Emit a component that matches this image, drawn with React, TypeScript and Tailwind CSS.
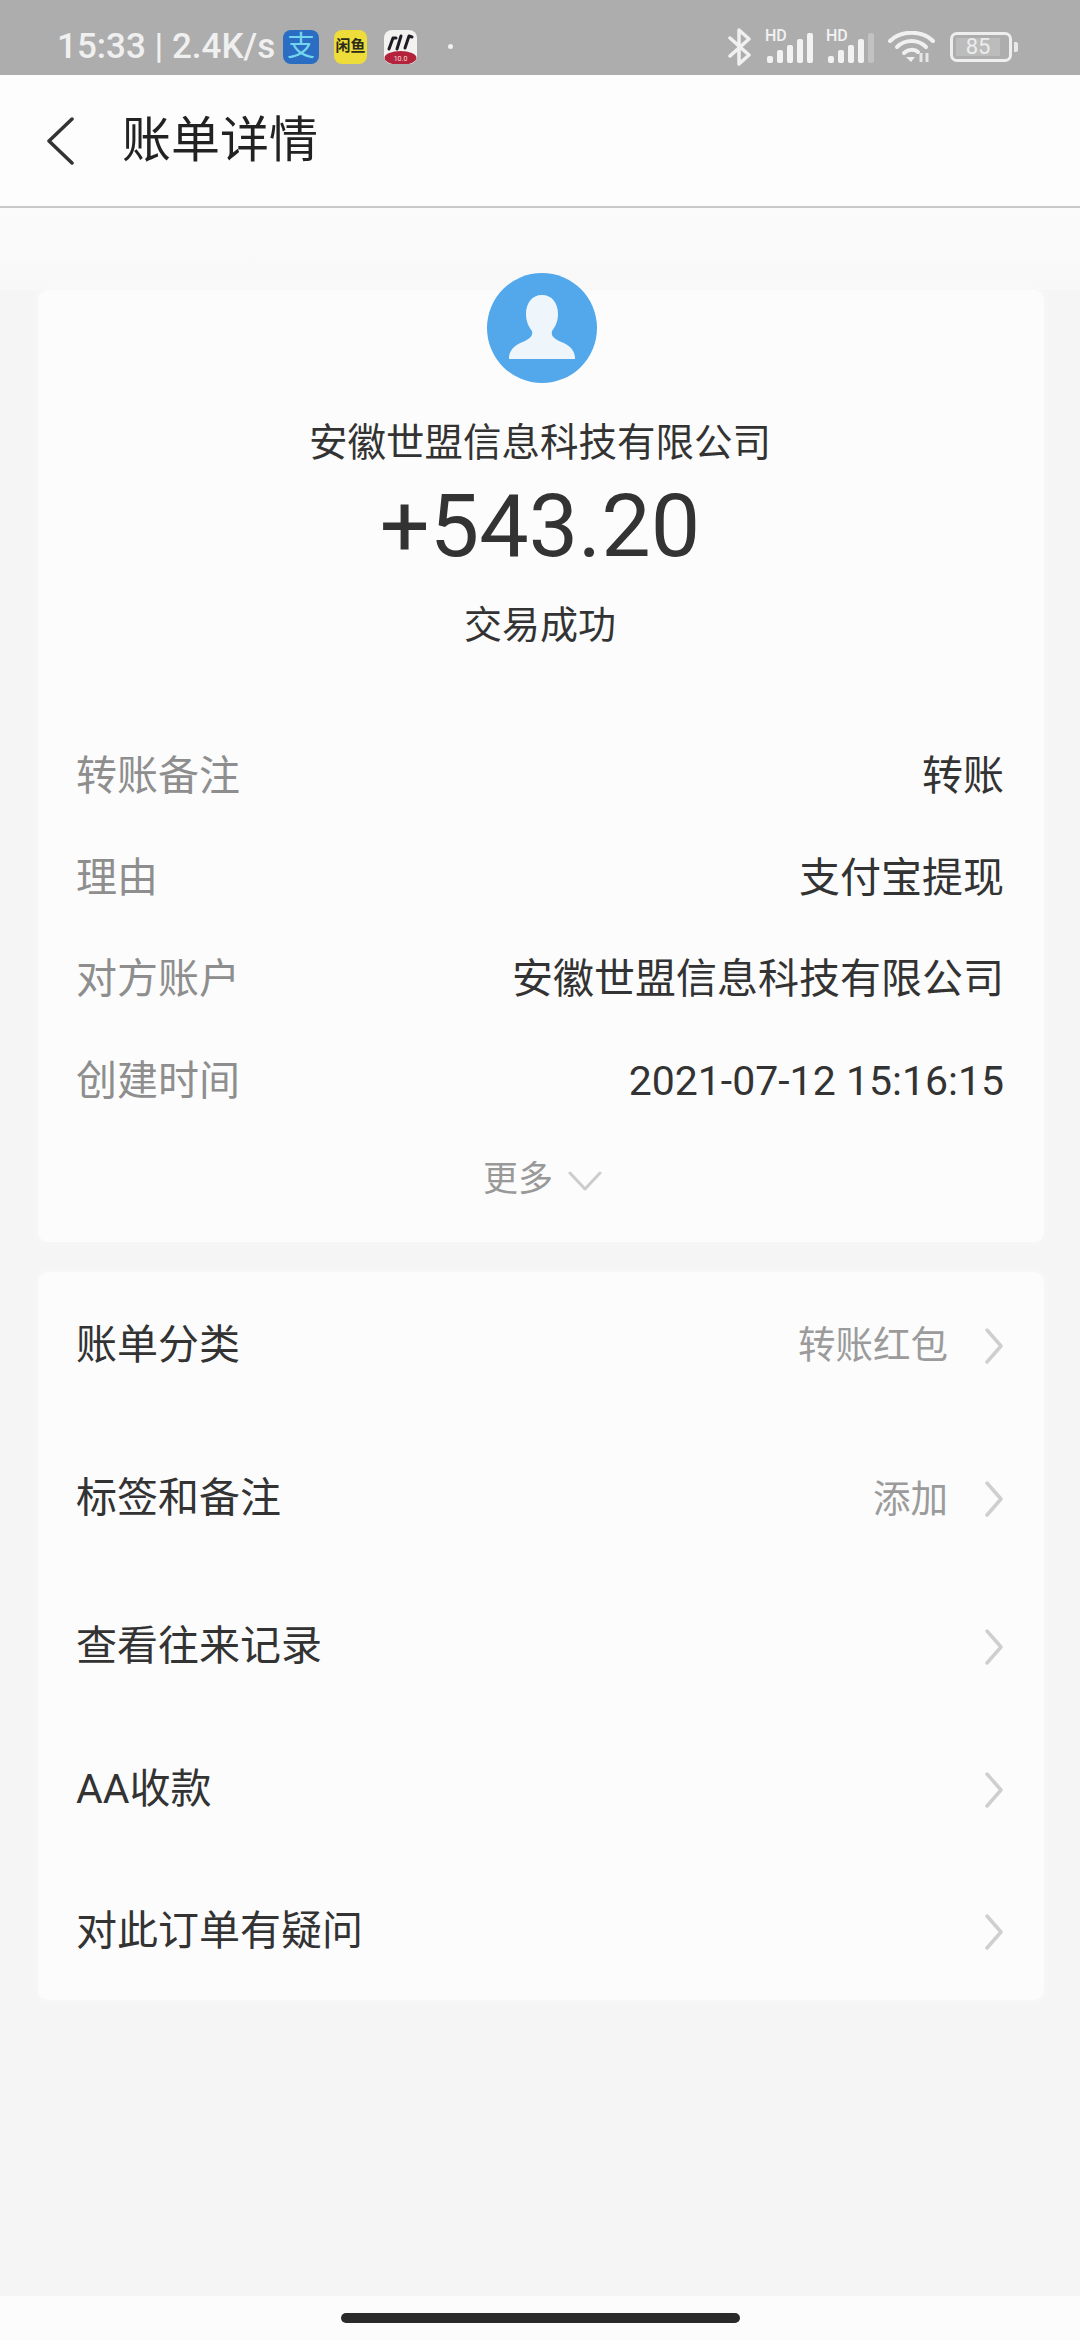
import React from "react";

const font = { fontFamily: 'Roboto, "Noto Sans CJK SC", sans-serif' };

function Signal({ dim }: { dim?: boolean }) {
  const bars = [
    { x: 2, y: 24, h: 7 },
    { x: 12, y: 18, h: 13 },
    { x: 22, y: 13, h: 18 },
    { x: 32, y: 7, h: 24 },
    { x: 42, y: 1, h: 30 },
  ];
  return (
    <div className="relative w-[50px] h-[34px]">
      <svg width="50" height="34" viewBox="0 0 50 34" className="absolute left-0 top-0">
        {bars.map((b, i) => (
          <rect
            key={i}
            x={b.x}
            y={b.y + 2}
            width="6"
            height={b.h}
            rx="2"
            fill={dim && i === 4 ? "#c2c2c2" : "#f2f2f2"}
          />
        ))}
      </svg>
      <span className="absolute left-0 -top-[1px] text-[16px] leading-[14px] font-medium text-[#f2f2f2]">HD</span>
    </div>
  );
}

function Chevron() {
  return (
    <svg width="20" height="36" viewBox="0 0 20 36" fill="none" className="shrink-0">
      <path d="M3 2 L17 18 L3 34" stroke="#cfcfcf" strokeWidth="3.5" strokeLinecap="round" strokeLinejoin="round" />
    </svg>
  );
}

function InfoRow({ label, value }: { label: string; value: string }) {
  return (
    <div className="flex items-center justify-between h-[101.67px] text-[41px]">
      <span className="text-[#8e8e8e]">{label}</span>
      <span className="text-[#333333]">{value}</span>
    </div>
  );
}

function LinkRow({ label, value, cls }: { label: string; value?: string; cls: string }) {
  return (
    <div className={`flex items-center justify-between ${cls}`}>
      <span className="text-[41px] text-[#333333]">{label}</span>
      <div className="flex items-center gap-[36px]">
        {value ? <span className="text-[37.5px] text-[#9b9b9b]">{value}</span> : null}
        <Chevron />
      </div>
    </div>
  );
}

export default function App() {
  return (
    <div className="w-[1080px] h-[2340px] flex flex-col bg-[#f5f5f5] overflow-hidden" style={font}>
      {/* status bar */}
      <div className="h-[75px] shrink-0 bg-[#adadad] flex items-center pt-[18px] pl-[57px] pr-[62px]">
        <span className="text-[35px] leading-[40px] font-medium text-[#f0f0f0] whitespace-nowrap w-[226px]">15:33 | 2.4K/s</span>
        <div className="w-[36px] h-[34px] rounded-[8px] bg-[#2a6dc2] flex items-center justify-center text-[28px] leading-none text-[#74d6ee]">
          支
        </div>
        <div className="ml-[15px] w-[33px] h-[34px] rounded-[8px] bg-[#eddc3a] flex items-center justify-center text-[15px] leading-none font-bold text-[#2a2a1a] whitespace-nowrap">
          闲鱼
        </div>
        <div className="ml-[17px] w-[33px] h-[34px] rounded-[8px] bg-[#f4f1f1] overflow-hidden">
          <svg width="33" height="34" viewBox="0 0 33 34" fill="none">
            <path d="M9 8 L5 19 M9 8 L12 8 M17 6 L13 19 M25 6 L21 18 M25 6 L28 7" stroke="#1c1c24" strokeWidth="3" strokeLinecap="round" />
            <ellipse cx="16.5" cy="28" rx="16" ry="7" fill="#b3243c" />
            <text x="16.5" y="31" textAnchor="middle" fontSize="7" fill="#f5dede">10.0</text>
          </svg>
        </div>
        <div className="ml-[31px] w-[5px] h-[5px] rounded-full bg-[#f0f0f0]" />
        <div className="ml-auto flex items-center">
          <svg width="24" height="38" viewBox="0 0 24 38" fill="none">
            <path d="M2 10 L21 27 L11 36 L11 2 L21 11 L2 28" stroke="#f0f0f0" strokeWidth="3.5" strokeLinejoin="round" strokeLinecap="round" />
          </svg>
          <div className="ml-[13px]"><Signal /></div>
          <div className="ml-[11px]"><Signal dim /></div>
          <svg width="47" height="31" viewBox="0 0 47 31" fill="none" className="ml-[12px]">
            <path d="M2 10 C13 -1 34 -1 45 10" stroke="#f0f0f0" strokeWidth="4" strokeLinecap="round" />
            <path d="M9 16 C17 8 30 8 38 16" stroke="#f0f0f0" strokeWidth="4" strokeLinecap="round" />
            <path d="M16 22 C20 18 27 18 30 21" stroke="#f0f0f0" strokeWidth="4" strokeLinecap="round" />
            <path d="M18 26 L23 31 L27 26 Z" fill="#f0f0f0" />
            <path d="M33 22 L33 31 M39 22 L39 31" stroke="#e6e6e6" strokeWidth="3" />
          </svg>
          <div className="ml-[15px] flex items-center">
            <div className="w-[62px] h-[30px] rounded-[7px] border-[3px] border-[#eeeeee] p-[3px] flex">
              <div className="w-[44px] h-full bg-[#bcbcbc] flex items-center justify-center text-[22px] leading-none text-[#ececec]">
                85
              </div>
            </div>
            <div className="ml-[2px] w-[4px] h-[10px] bg-[#e8e8e8] rounded-r-[2px]" />
          </div>
        </div>
      </div>

      {/* header */}
      <div className="h-[133px] shrink-0 bg-[#fdfdfd] border-b-2 border-[#c9c9c9] flex items-center pl-[46px]">
        <svg width="28" height="48" viewBox="0 0 28 48" fill="none" className="shrink-0">
          <path d="M26 2 L3 24 L26 46" stroke="#333333" strokeWidth="3.5" strokeLinecap="round" strokeLinejoin="round" />
        </svg>
        <h1 className="ml-[48px] text-[49px] leading-[60px] font-normal text-[#222222]">账单详情</h1>
      </div>

      {/* soft band above first card */}
      <div className="h-[82px] shrink-0 bg-gradient-to-b from-[#fbfbfb] to-[#f8f8f8]" />

      {/* main card */}
      <div className="ml-[38px] mr-[36px] h-[952px] shrink-0 bg-[#fcfcfc] rounded-[10px] pl-[38px] pr-[40px] flex flex-col shadow-[0_0_8px_#f9f9f9]">
        <div className="flex flex-col items-center">
          <svg width="110" height="110" viewBox="0 0 110 110" className="-mt-[17px] ml-[3px]">
            <circle cx="55" cy="55" r="55" fill="#53a8eb" />
            <path
              d="M55 22 C45 22 39 30 39 41 C39 49 42 54 45 58 C46 62 44 65 38 68 C30 71 23 75 22 84 L22 86 L88 86 L88 84 C87 75 80 71 72 68 C66 65 64 62 65 58 C68 54 71 49 71 41 C71 30 65 22 55 22 Z"
              fill="#eef6fc"
            />
          </svg>
          <div className="mt-[35px] text-[38.5px] leading-[50px] text-[#333333]">安徽世盟信息科技有限公司</div>
          <div className="mt-[8px] text-[88px] leading-[100px] text-[#333333]">+543.20</div>
          <div className="mt-[24px] text-[38px] leading-[50px] text-[#333333]">交易成功</div>
        </div>
        <div className="mt-[76px]">
          <InfoRow label="转账备注" value="转账" />
          <InfoRow label="理由" value="支付宝提现" />
          <InfoRow label="对方账户" value="安徽世盟信息科技有限公司" />
          <InfoRow label="创建时间" value="2021-07-12 15:16:15" />
        </div>
        <div className="h-[96px] flex items-center justify-center gap-[15px] pl-[5px] text-[35px] text-[#999999]">
          <span>更多</span>
          <svg width="34" height="20" viewBox="0 0 34 20" fill="none">
            <path d="M2 2 L17 18 L32 2" stroke="#cccccc" strokeWidth="3" strokeLinecap="round" strokeLinejoin="round" />
          </svg>
        </div>
      </div>

      {/* link card */}
      <div className="ml-[38px] mr-[36px] mt-[30px] shrink-0 bg-[#fcfcfc] rounded-[10px] pl-[38px] pr-[40px] shadow-[0_0_8px_#f9f9f9]">
        <LinkRow cls="h-[147px]" label="账单分类" value="转账红包" />
        <LinkRow cls="h-[160px]" label="标签和备注" value="添加" />
        <LinkRow cls="h-[136px]" label="查看往来记录" />
        <LinkRow cls="h-[149px]" label="AA收款" />
        <LinkRow cls="h-[136px]" label="对此订单有疑问" />
      </div>

      {/* home indicator */}
      <div className="mt-auto h-[44px] shrink-0 bg-[#fcfcfc] flex items-center justify-center">
        <div className="w-[399px] h-[10px] rounded-full bg-[#2a2a2a]" />
      </div>
    </div>
  );
}
